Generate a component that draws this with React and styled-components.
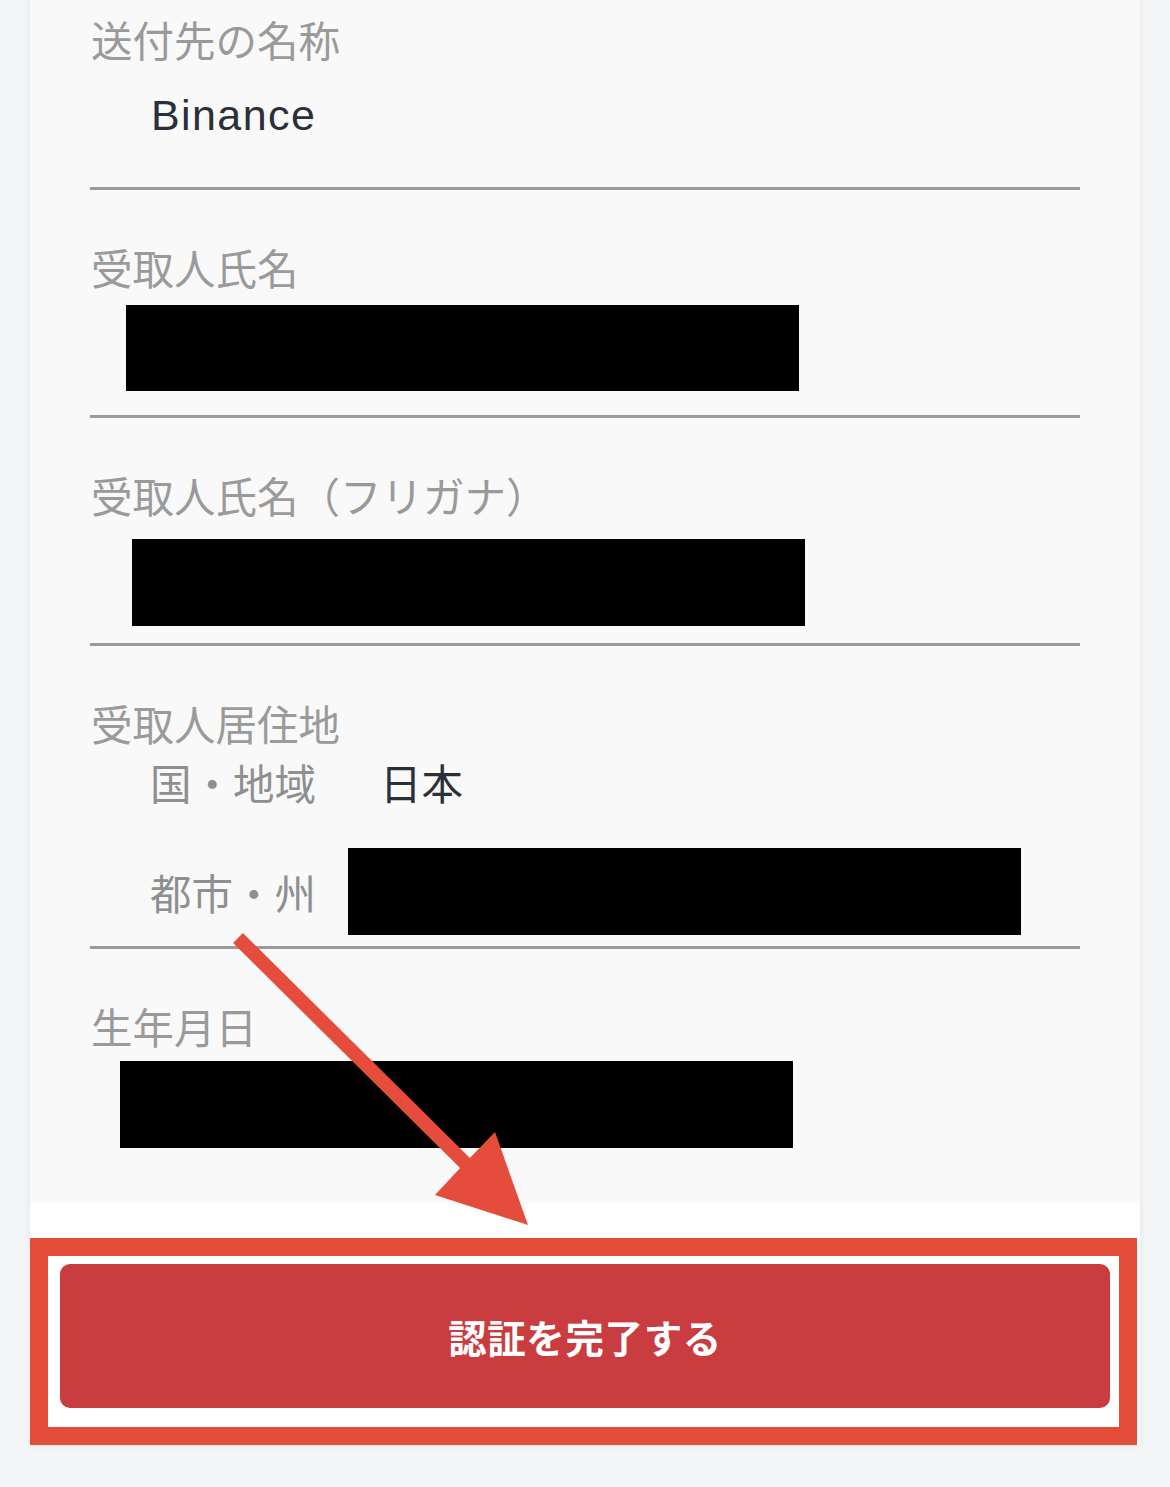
import React from 'react';
import styled, { createGlobalStyle } from 'styled-components';

const GlobalStyle = createGlobalStyle`
  body {
    margin: 0;
    background: #f4f5f7;
    font-family: "Noto Sans CJK JP", "Noto Sans", sans-serif;
  }
`;

// Styled Components
const Page = styled.div`
  position: relative;
  box-sizing: border-box;
  min-height: 1487px;
  padding: 0 30px;
`;

const Card = styled.div`
  background: #f9f9f9;
  box-shadow: 0 0 7px rgba(0, 0, 0, 0.07);
`;

const Fields = styled.div`
  padding: 0 60px 29px;
`;

const Field = styled.div`
  padding-top: 52px;
  border-bottom: ${(p) => (p.$last ? 'none' : '3px solid #9b9b9b')};

  &:first-child {
    padding-top: 14px;
  }
`;

const Label = styled.div`
  font-size: 41.5px;
  line-height: 50px;
  color: #9a9a9a;
  padding-left: 1px;
`;

const ValueRow = styled.div`
  box-sizing: border-box;
  min-height: 123px;
  padding-top: 23px;
`;

const Value = styled.div`
  font-family: "Liberation Sans", "Noto Sans CJK JP", sans-serif;
  font-size: 43px;
  line-height: 56px;
  letter-spacing: 1.4px;
  color: #2b3038;
  margin-left: 61px;
`;

const Redacted = styled.div`
  width: 673px;
  height: ${(p) => p.$h || 86}px;
  background: #000;
  margin-left: ${(p) => p.$x}px;
  margin-top: ${(p) => p.$y - 17}px;
`;

const SubRows = styled.div`
  padding: 6px 0 11px 60px;
`;

const SubRow = styled.div`
  display: flex;
  align-items: center;
  gap: ${(p) => p.$gap}px;
  margin-top: ${(p) => p.$top || 0}px;
`;

const SubLabel = styled.span`
  font-size: 41.5px;
  line-height: 56px;
  color: #8f8f8f;
`;

const SubValue = styled.span`
  font-size: 41.5px;
  line-height: 56px;
  color: #2b3038;
`;

const Footer = styled.div`
  background: #fff;
  padding: 35px 3px 0 0;
`;

const Highlight = styled.div`
  border: 18px solid #e54d3b;
  background: #fff;
  padding: 8px 9px 19px 12px;
`;

const SubmitButton = styled.button`
  display: flex;
  align-items: center;
  justify-content: center;
  width: 100%;
  height: 144px;
  border: none;
  border-radius: 10px;
  background: #c93c40;
  color: #fff;
  font-family: "Noto Sans CJK JP", sans-serif;
  font-size: 38.5px;
  font-weight: 700;
  letter-spacing: 0.6px;
  cursor: pointer;
`;

const Arrow = styled.svg`
  position: absolute;
  left: 225px;
  top: 925px;
  width: 310px;
  height: 305px;
  pointer-events: none;
`;

export default function App() {
  return (
    <Page>
      <GlobalStyle />
      <Card>
        <Fields>
          <Field>
            <Label>送付先の名称</Label>
            <ValueRow>
              <Value>Binance</Value>
            </ValueRow>
          </Field>

          <Field>
            <Label>受取人氏名</Label>
            <ValueRow>
              <Redacted $x={36} $y={7} />
            </ValueRow>
          </Field>

          <Field>
            <Label>受取人氏名（フリガナ）</Label>
            <ValueRow>
              <Redacted $x={42} $y={13} $h={87} />
            </ValueRow>
          </Field>

          <Field>
            <Label>受取人居住地</Label>
            <SubRows>
              <SubRow $gap={64}>
                <SubLabel>国・地域</SubLabel>
                <SubValue>日本</SubValue>
              </SubRow>
              <SubRow $gap={32} $top={38}>
                <SubLabel>都市・州</SubLabel>
                <Redacted $x={0} $y={17} $h={87} />
              </SubRow>
            </SubRows>
          </Field>

          <Field $last>
            <Label>生年月日</Label>
            <ValueRow>
              <Redacted $x={30} $y={4} $h={87} />
            </ValueRow>
          </Field>
        </Fields>

        <Footer>
          <Highlight>
            <SubmitButton>認証を完了する</SubmitButton>
          </Highlight>
        </Footer>
      </Card>

      <Arrow viewBox="225 925 310 305">
        <polygon
          points="242.9,933 469.9,1158 495,1132 528,1225 435,1195 460.1,1168 233.1,943"
          fill="#e64c3c"
        />
      </Arrow>
    </Page>
  );
}
